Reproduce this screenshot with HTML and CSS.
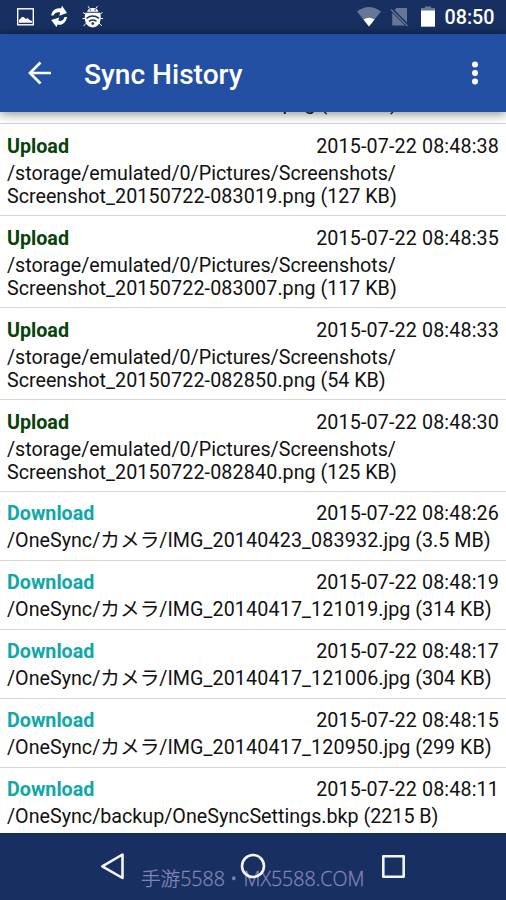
FILE: index.html
```html
<!DOCTYPE html>
<html lang="en">
<head>
<meta charset="utf-8">
<title>Sync History</title>
<link rel="stylesheet" href="styles.css">
</head>
<body>
<div class="screen">
  <div class="status">
    <svg class="status-left" width="120" height="34" viewBox="0 0 120 34">
      <rect x="17.700" y="8.800" width="15.600" height="16" fill="none" stroke="#fff" stroke-width="1.400"/>
      <path d="M19 22.800v-2.800l3-3 1.500 0 2.500 2 1.500-1 2 2 2.500 1V22.800z" fill="#fff"/>
      <path d="M51.200 15.500C52 10.500 56 7.500 61 8.500L62 5.800 67 13 59.300 15.700 60.300 12.600C57.500 11.600 55 12.500 53.500 15.500zM67 17C66 22.800 62 25.800 57.500 24.500L56.500 27.200 51.200 20 59.300 17.500 58.300 20.500C61 21.800 63.500 20 64.600 16.900z" fill="#fff"/>
      <path d="M87.200 11.800c.3-5.200 10.800-5.200 11.100 0z" fill="#fff"/>
      <path d="M89.500 8.500l-1.400-2.300M96 8.500l1.400-2.300M86 14.500l-3-2M99.500 14.500l3-2M85 18.500h-2.500M100.500 18.500h2.500M86.500 23l-3 3M99 23l3 3" stroke="#fff" stroke-width="1" fill="none"/>
      <path d="M85.500 12.800h14.500c2.200 6.500-.3 14.600-7.250 14.600s-9.450-8.100-7.250-14.600z" fill="#fff"/>
      <path d="M86.500 18.300q6.250-4.400 12.500 0M89 21.300q3.750-2.600 7.500 0" stroke="#173061" stroke-width="1.500" fill="none"/>
      <circle cx="92.750" cy="23.600" r="1.300" fill="#173061"/>
      <circle cx="90.300" cy="10" r=".8" fill="#173061"/><circle cx="95.200" cy="10" r=".8" fill="#173061"/>
    </svg>
    <svg class="status-right" width="90" height="34" viewBox="350 0 90 34">
      <path d="M357 11.500Q369 2.500 381 11.500L369 26.500z" fill="#667694"/>
      <path d="M363.500 19.600Q369 16 374.500 19.600L369 26.500z" fill="#fff"/>
      <path d="M396.500 8H407v14.500L394.500 10zM392.200 12.700L405 25.500H392.200z" fill="#667694"/>
      <path d="M391 9.500L407.500 26" stroke="#667694" stroke-width="1.500"/>
      <path d="M421 11V8h3.800V6.500h6.400V8H435v3z" fill="#667694"/>
      <path d="M421 10.500h14V26.700h-14z" fill="#fff"/>
    </svg>
    <span class="clock">08:50</span>
  </div>
  <header class="appbar">
    <svg class="back" width="24" height="24" viewBox="0 0 24 24"><path d="M12.500 1.500L2 12 12.500 22.500M2.200 12H23" fill="none" stroke="#fff" stroke-width="2.700"/></svg>
    <h1>Sync History</h1>
    <svg class="more" width="8" height="24" viewBox="0 0 8 24" fill="#fff"><circle cx="4" cy="3.500" r="3"/><circle cx="4" cy="12" r="3"/><circle cx="4" cy="20.500" r="3"/></svg>
  </header>
  <main class="list">
    <div class="rows">
      <article class="row partial"><p>Screenshot<span class="num">_20150722-083030</span>.png (120 KB)</p></article>
      <article class="row up"><div class="head"><b>Upload</b><time class="num">2015-07-22 08:48:38</time></div><p>/storage/emulated/0/Pictures/Screenshots/<br>Screenshot<span class="num">_20150722-083019</span>.png (127 KB)</p></article>
      <article class="row up"><div class="head"><b>Upload</b><time class="num">2015-07-22 08:48:35</time></div><p>/storage/emulated/0/Pictures/Screenshots/<br>Screenshot<span class="num">_20150722-083007</span>.png (117 KB)</p></article>
      <article class="row up"><div class="head"><b>Upload</b><time class="num">2015-07-22 08:48:33</time></div><p>/storage/emulated/0/Pictures/Screenshots/<br>Screenshot<span class="num">_20150722-082850</span>.png (54 KB)</p></article>
      <article class="row up"><div class="head"><b>Upload</b><time class="num">2015-07-22 08:48:30</time></div><p>/storage/emulated/0/Pictures/Screenshots/<br>Screenshot<span class="num">_20150722-082840</span>.png (125 KB)</p></article>
      <article class="row down"><div class="head"><b>Download</b><time class="num">2015-07-22 08:48:26</time></div><p>/OneSync/<span lang="ja">カメラ</span>/IMG<span class="num">_20140423_083932</span>.jpg (3.5 MB)</p></article>
      <article class="row down"><div class="head"><b>Download</b><time class="num">2015-07-22 08:48:19</time></div><p>/OneSync/<span lang="ja">カメラ</span>/IMG<span class="num">_20140417_121019</span>.jpg (314 KB)</p></article>
      <article class="row down"><div class="head"><b>Download</b><time class="num">2015-07-22 08:48:17</time></div><p>/OneSync/<span lang="ja">カメラ</span>/IMG<span class="num">_20140417_121006</span>.jpg (304 KB)</p></article>
      <article class="row down"><div class="head"><b>Download</b><time class="num">2015-07-22 08:48:15</time></div><p>/OneSync/<span lang="ja">カメラ</span>/IMG<span class="num">_20140417_120950</span>.jpg (299 KB)</p></article>
      <article class="row down"><div class="head"><b>Download</b><time class="num">2015-07-22 08:48:11</time></div><p>/OneSync/backup/OneSyncSettings.bkp (2215 B)</p></article>
    </div>
  </main>
  <nav class="navbar">
    <svg width="506" height="67" viewBox="0 833 506 67" fill="none" stroke="#f4f4f8" stroke-width="2.600" stroke-linejoin="round">
      <path d="M102.300 866.300L122.500 854.500V878z"/>
      <circle cx="253" cy="866" r="11"/>
      <rect x="383.300" y="856.300" width="20.400" height="20.400"/>
    </svg>
    <span class="mark">手游5588 • <span class="site">MX5588.COM</span></span>
  </nav>
</div>
</body>
</html>
```

FILE: styles.css
```css
body {
  margin: 0;
  background: #fff;
  font-family: Roboto, "Noto Sans CJK JP", sans-serif;
  color: #111;
}
.screen {
  display: flex;
  flex-direction: column;
  width: 506px;
  height: 900px;
  overflow: hidden;
}
.status {
  display: flex;
  flex: 0 0 34px;
  height: 34px;
  min-height: 0;
  background: linear-gradient(#173061 29px, #142a56);
}
.status-right {
  margin-left: auto;
}
.clock {
  width: 66px;
  height: 34px;
  box-sizing: border-box;
  padding: 2px 0 0 4.5px;
  font-size: 19.7px;
  font-weight: 500;
  line-height: 32px;
  color: #fff;
}
.appbar {
  display: flex;
  align-items: center;
  flex: 0 0 78px;
  box-sizing: border-box;
  padding: 0 27px 0 28px;
  background: #2350a3;
  box-shadow: 0 2px 10px rgba(0, 0, 0, .45);
  z-index: 1;
}
.appbar h1 {
  flex: 1;
  margin: 4px 0 0 32px;
  font-size: 28.1px;
  font-weight: 500;
  line-height: 34px;
  color: #fff;
}
.list {
  flex: 1;
  min-height: 0;
  overflow: hidden;
}
.rows {
  margin-top: -24px;
}
.row {
  box-sizing: border-box;
  padding: 11px 7px 0;
  border-bottom: 1px solid #d6d6d6;
  font-size: 19.7px;
  line-height: 23px;
}
.partial {
  height: 36px;
  padding-top: 4px;
}
.up {
  height: 92px;
}
.down {
  height: 69px;
  padding-top: 10px;
}
.head {
  display: flex;
  justify-content: space-between;
}
.head b {
  font-weight: 700;
}
.up b {
  color: #07430a;
}
.down b {
  color: #0fa8a8;
}
.row p {
  margin: 4px 0 0;
  white-space: nowrap;
}
.partial p {
  margin: 0;
}
.num {
  letter-spacing: .14px;
  white-space: nowrap;
}
.navbar {
  position: relative;
  flex: 0 0 67px;
  background: #173061;
}
.navbar svg {
  position: relative;
  z-index: 1;
  display: block;
}
.mark {
  position: absolute;
  left: 141px;
  top: 32px;
  font-family: "Open Sans", "Noto Sans CJK SC", sans-serif;
  font-size: 19.6px;
  font-weight: 300;
  line-height: 28px;
  color: #8583b5;
  -webkit-text-stroke: .3px #8583b5;
  white-space: nowrap;
}
.site {
  margin-left: 1px;
}
```
